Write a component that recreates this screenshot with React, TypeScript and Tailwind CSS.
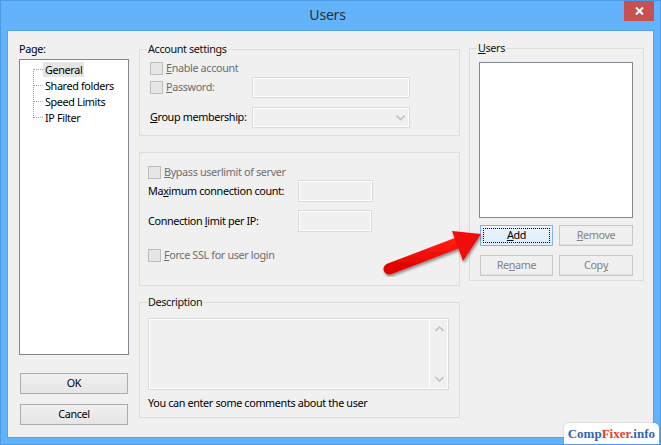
import type { ReactNode } from "react";

const font = { fontFamily: '"Noto Sans", "Open Sans", Arial, sans-serif' };

function Checkbox() {
    return <span className="w-[13px] h-[13px] shrink-0 border border-[#bcbcbc] bg-[#e6e6e6]" />;
}

function Field({ w, h = "h-[21px]" }: { w: string; h?: string }) {
    return <div className={`${w} ${h} border border-[#d9d9d9] bg-[#f0f0f0] shadow-[inset_0_0_0_1px_#ffffff]`} />;
}

function WinButton({ children, w, disabled }: { children: ReactNode; w: string; disabled?: boolean }) {
    return (
        <button
            type="button"
            className={`${w} h-[21px] border flex items-center justify-center text-[10.8px] tracking-[-0.35px] ${
                disabled
                    ? "border-[#c8c8c8] bg-[#f0f0f0] text-[#838383] shadow-[inset_0_-1px_0_#e2e2e2]"
                    : "border-[#acacac] bg-gradient-to-b from-[#f0f0f0] to-[#e5e5e5] text-black"
            }`}
        >
            {children}
        </button>
    );
}

function TreeRow({ label, first, last, selected }: { label: string; first?: boolean; last?: boolean; selected?: boolean }) {
    return (
        <div className="h-[16px] flex items-center pl-[13px] whitespace-nowrap">
            <svg width="10" height="16" className="shrink-0">
                <line x1="0.5" y1={first ? 8 : 0} x2="0.5" y2={last ? 9 : 16} stroke="#a0a0a0" strokeDasharray="1 1" />
                <line x1="1" y1="8.5" x2="10" y2="8.5" stroke="#a0a0a0" strokeDasharray="1 1" />
            </svg>
            <span className={`px-[2px] leading-[15px] ${selected ? "bg-[#e5e5e5]" : ""}`}>{label}</span>
        </div>
    );
}

function GroupTitle({ children }: { children: ReactNode }) {
    return <span className="-mt-[9px] ml-[7px] px-[1px] self-start bg-[#f0f0f0] leading-[16px] text-[#111] whitespace-nowrap">{children}</span>;
}

export default function App() {
    return (
        <div className="relative w-[661px] h-[445px] overflow-hidden bg-[#63b3fb] border border-[#4d9be6] text-[10.8px] tracking-[-0.35px] text-black whitespace-nowrap" style={font}>
            {/* title bar */}
            <div className="h-[29px] flex items-start">
                <div className="flex-1" />
                <div className="pt-[4px] text-[14px] tracking-[-0.2px] leading-[20px] text-[#2a2f36]">Users</div>
                <div className="flex-1 flex justify-end pr-[6px]">
                    <div className="w-[30px] h-[20px] bg-[#c75050] flex items-center justify-center">
                        <svg width="9" height="8" viewBox="0 0 9 8">
                            <path d="M1 0.5 L8 7.5 M8 0.5 L1 7.5" stroke="#fff" strokeWidth="2" />
                        </svg>
                    </div>
                </div>
            </div>

            {/* client area */}
            <div className="ml-[6px] w-[647px] h-[408px] border border-[#5aa2e8] bg-[#f0f0f0] flex items-start">
                {/* left column */}
                <div className="ml-[11px] w-[110px] mt-[10px] flex flex-col">
                    <div className="leading-[16px]">Page:</div>
                    <div className="mt-[2px] h-[296px] border border-[#828790] bg-white pt-[1px]">
                        <TreeRow label="General" first selected />
                        <TreeRow label="Shared folders" />
                        <TreeRow label="Speed Limits" />
                        <TreeRow label="IP Filter" last />
                    </div>
                    <div className="ml-[1px] mt-[18px]">
                        <WinButton w="w-[108px]">OK</WinButton>
                    </div>
                    <div className="ml-[1px] mt-[10px]">
                        <WinButton w="w-[108px]">Cancel</WinButton>
                    </div>
                </div>

                {/* middle column */}
                <div className="ml-[10px] w-[321px] mt-[18px] flex flex-col">
                    <div className="h-[87px] border border-[#dcdcdc] flex flex-col">
                        <GroupTitle>Account settings</GroupTitle>
                        <div className="mt-[3px] h-[16px] pl-[10px] flex items-center gap-[3px] text-[#6d6d6d]">
                            <Checkbox />
                            <span><u>E</u>nable account</span>
                        </div>
                        <div className="mt-[1px] h-[21px] pl-[10px] flex items-center">
                            <div className="w-[102px] flex items-center gap-[3px] text-[#6d6d6d]">
                                <Checkbox />
                                <span><u>P</u>assword:</span>
                            </div>
                            <Field w="w-[158px]" />
                        </div>
                        <div className="mt-[9px] h-[21px] pl-[10px] flex items-center">
                            <div className="w-[102px]"><u>G</u>roup membership:</div>
                            <div className="w-[158px] h-[21px] border border-[#d9d9d9] bg-[#f0f0f0] shadow-[inset_0_0_0_1px_#ffffff] flex items-center justify-end pr-[4px]">
                                <svg width="9" height="6" viewBox="0 0 9 6">
                                    <path d="M0.5 0.5 L4.5 4.5 L8.5 0.5" stroke="#c2c2c2" strokeWidth="1.6" fill="none" />
                                </svg>
                            </div>
                        </div>
                    </div>

                    <div className="mt-[16px] h-[134px] border border-[#dcdcdc] flex flex-col">
                        <div className="mt-[11px] h-[16px] pl-[8px] flex items-center gap-[3px] text-[#6d6d6d]">
                            <Checkbox />
                            <span><u>B</u>ypass userlimit of server</span>
                        </div>
                        <div className="h-[22px] pl-[8px] flex items-center">
                            <div className="w-[150px]">Ma<u>x</u>imum connection count:</div>
                            <Field w="w-[75px]" h="h-[22px]" />
                        </div>
                        <div className="mt-[8px] h-[22px] pl-[8px] flex items-center">
                            <div className="w-[150px]">Connection <u>l</u>imit per IP:</div>
                            <Field w="w-[74px]" h="h-[22px]" />
                        </div>
                        <div className="mt-[15px] h-[16px] pl-[8px] flex items-center gap-[3px] text-[#6d6d6d]">
                            <Checkbox />
                            <span><u>F</u>orce SSL for user login</span>
                        </div>
                    </div>

                    <div className="mt-[16px] h-[116px] border border-[#dcdcdc] flex flex-col">
                        <GroupTitle>Description</GroupTitle>
                        <div className="mt-[8px] ml-[8px] w-[301px] h-[72px] border border-[#d9d9d9] bg-[#f0f0f0] shadow-[inset_0_0_0_1px_#ffffff] flex">
                            <div className="flex-1" />
                            <div className="w-[19px] border-l border-[#ffffff] flex flex-col items-center justify-between py-[7px]">
                                <svg width="9" height="6" viewBox="0 0 9 6">
                                    <path d="M0.5 5 L4.5 1 L8.5 5" stroke="#c2c2c2" strokeWidth="1.6" fill="none" />
                                </svg>
                                <svg width="9" height="6" viewBox="0 0 9 6">
                                    <path d="M0.5 1 L4.5 5 L8.5 1" stroke="#c2c2c2" strokeWidth="1.6" fill="none" />
                                </svg>
                            </div>
                        </div>
                        <div className="mt-[5px] h-[16px] pl-[8px] leading-[16px]">You can enter some comments about the user</div>
                    </div>
                </div>

                {/* right column */}
                <div className="ml-[9px] w-[175px] mt-[17px]">
                    <div className="h-[233px] border border-[#dcdcdc] flex flex-col">
                        <GroupTitle><u>U</u>sers</GroupTitle>
                        <div className="mt-[6px] ml-[9px] w-[154px] h-[156px] border border-[#828790] bg-white" />
                        <div className="mt-[7px] ml-[10px] flex gap-[6px]">
                            <button
                                type="button"
                                className="w-[73px] h-[21px] border border-[#7eb4ea] bg-gradient-to-b from-[#ecf4fc] to-[#dcecfc] p-[2px] text-[10.8px] tracking-[-0.35px]"
                            >
                                <div className="w-full h-full border border-dotted border-black flex items-center justify-center">
                                    <span><u>A</u>dd</span>
                                </div>
                            </button>
                            <WinButton w="w-[74px]" disabled><u>R</u>emove</WinButton>
                        </div>
                        <div className="mt-[9px] ml-[10px] flex gap-[6px]">
                            <WinButton w="w-[73px]" disabled>Re<u>n</u>ame</WinButton>
                            <WinButton w="w-[74px]" disabled>Cop<u>y</u></WinButton>
                        </div>
                    </div>
                </div>
            </div>

            {/* red annotation arrow */}
            <svg className="absolute -left-px -top-px pointer-events-none" width="661" height="445" viewBox="0 0 661 445">
                <defs>
                    <filter id="sh" x="-20%" y="-20%" width="140%" height="140%">
                        <feDropShadow dx="1" dy="2" stdDeviation="1.5" floodColor="#000" floodOpacity="0.45" />
                    </filter>
                    <linearGradient id="rg" x1="0" y1="0" x2="0" y2="1">
                        <stop offset="0" stopColor="#ff1a10" />
                        <stop offset="1" stopColor="#e00000" />
                    </linearGradient>
                </defs>
                <g filter="url(#sh)">
                    <path d="M389 269 L460 242" stroke="url(#rg)" strokeWidth="11" strokeLinecap="round" />
                    <polygon points="452,231 481,234 463,261" fill="#f20c08" />
                </g>
            </svg>

            {/* watermark */}
            <div className="absolute right-[1px] -bottom-px h-[22px] px-[4px] rounded-t-[5px] bg-white flex items-center shadow-[0_0_2px_rgba(0,0,0,0.2)]">
                <span className="text-[13px] font-bold leading-[16px] tracking-normal" style={{ fontFamily: '"Liberation Serif", "Times New Roman", serif' }}>
                    <span className="text-[#3565b0]">Comp</span>
                    <span className="text-[#e53c2a]">Fixer</span>
                    <span className="text-[#3565b0]">.info</span>
                </span>
            </div>
        </div>
    );
}
